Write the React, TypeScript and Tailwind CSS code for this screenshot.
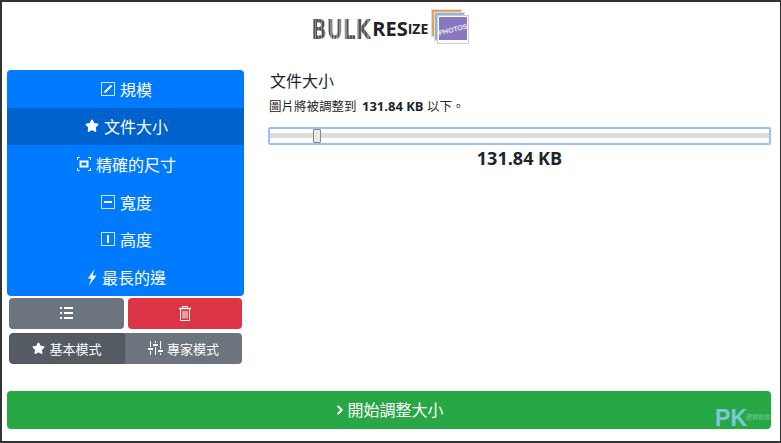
import { Star, ChevronRight } from "lucide-react"

const cjk = "font-['Liberation_Sans','Noto_Sans_CJK_TC',sans-serif]"

function SquareIcon({ kind }: { kind: "pen" | "minus" | "bar" }) {
  return (
    <svg width="14" height="14" viewBox="0 0 14 14" fill="none" className="shrink-0">
      <rect x="0.5" y="0.5" width="13" height="13" stroke="#cfe4ff" />
      {kind === "pen" && <path d="M3.5 10.5 L10.5 3.5" stroke="white" strokeWidth="2" />}
      {kind === "minus" && <path d="M3 7 H11" stroke="white" strokeWidth="2" />}
      {kind === "bar" && <path d="M7 3 V11" stroke="white" strokeWidth="2" />}
    </svg>
  )
}

function FocusIcon() {
  return (
    <svg width="14" height="14" viewBox="0 0 14 14" fill="none" className="shrink-0">
      <path d="M0.5 3 V0.5 H3 M11 0.5 H13.5 V3 M13.5 11 V13.5 H11 M3 13.5 H0.5 V11" stroke="white" />
      <rect x="3.5" y="4.5" width="7" height="5" stroke="white" strokeWidth="2" />
    </svg>
  )
}

function BoltIcon() {
  return (
    <svg width="10" height="17" viewBox="0 0 10 17" className="shrink-0">
      <path d="M7.5 0 L1 9.5 H4.5 L1.5 17 L9.5 6.5 H5.5 Z" fill="white" />
    </svg>
  )
}

function ListIcon() {
  return (
    <svg width="13" height="12" viewBox="0 0 13 12" fill="white">
      <rect x="0" y="0" width="2" height="2" />
      <rect x="4" y="0" width="9" height="2" />
      <rect x="0" y="5" width="2" height="2" />
      <rect x="4" y="5" width="9" height="2" />
      <rect x="0" y="10" width="2" height="2" />
      <rect x="4" y="10" width="9" height="2" />
    </svg>
  )
}

function TrashIcon() {
  return (
    <svg width="12" height="15" viewBox="0 0 12 15" fill="none" stroke="white">
      <path d="M0 2.5 H12" strokeWidth="1.5" />
      <path d="M3.5 2 V0.5 H8.5 V2" />
      <path d="M1.5 3 V14.5 H10.5 V3" />
      <path d="M4 5 V12.5 M6 5 V12.5 M8 5 V12.5" />
    </svg>
  )
}

function SlidersIcon() {
  return (
    <svg width="15" height="14" viewBox="0 0 15 14" fill="none" stroke="white" className="shrink-0">
      <path d="M2.5 0 V6 M2.5 10 V14 M7.5 0 V2 M7.5 6 V14 M12.5 0 V8 M12.5 12 V14" />
      <path d="M0 8 H5 M5 4 H10 M10 10 H15" strokeWidth="2" />
    </svg>
  )
}

function NavRow({ icon, label, active }: { icon: React.ReactNode; label: string; active?: boolean }) {
  return (
    <div className={`flex h-[37.67px] items-center justify-center gap-[5px] pl-[2px] text-[16px] text-white ${active ? "bg-[#0062cc]" : ""}`}>
      {icon}
      <span className="pt-[4px]">{label}</span>
    </div>
  )
}

function Logo() {
  return (
    <div className="flex h-[68px] items-center justify-center pb-[14px]">
      <span className="mx-[-10px] inline-block scale-x-[0.74] bg-[repeating-linear-gradient(90deg,#555_0px,#555_1px,#8a8a8a_1px,#8a8a8a_2px)] bg-clip-text font-['DejaVu_Sans',sans-serif] text-[27px] leading-none font-bold text-transparent">BULK</span>
      <span className="ml-[1px] font-['Open_Sans',sans-serif] text-[20px] leading-none font-bold text-[#222]">RES</span>
      <span className="font-['Open_Sans',sans-serif] text-[14px] leading-none font-bold text-[#222]">IZE</span>
      <svg width="40" height="36" viewBox="0 0 40 36" className="mt-[-4px] ml-[3px]">
        <rect x="0.5" y="0.5" width="30" height="27" fill="#e2a64e" stroke="#ddd" />
        <rect x="3.5" y="3.5" width="30" height="28" fill="#8fb4e0" stroke="#ddd" />
        <rect x="6.5" y="6.5" width="31" height="28" fill="#fff" stroke="#ccc" />
        <rect x="8" y="8" width="28" height="23" fill="#8a77c0" />
        <text x="22" y="23" textAnchor="middle" fontSize="7" fontWeight="700" fill="#e8e4f5" fontFamily="Liberation Sans" transform="rotate(-14 22 21)">PHOTOS</text>
      </svg>
    </div>
  )
}

export default function App() {
  return (
    <div className={`relative h-[443px] w-[781px] overflow-hidden border-t-2 border-r border-b-2 border-l-2 border-[#333] bg-white ${cjk}`}>
      <Logo />
      <div className="flex">
        <div className="ml-[5px] w-[237px] shrink-0">
          <div className="overflow-hidden rounded-[4px] bg-[#007bff]">
            <NavRow icon={<SquareIcon kind="pen" />} label="規模" />
            <NavRow icon={<Star size={14} fill="white" stroke="white" className="shrink-0" />} label="文件大小" active />
            <NavRow icon={<FocusIcon />} label="精確的尺寸" />
            <NavRow icon={<SquareIcon kind="minus" />} label="寬度" />
            <NavRow icon={<SquareIcon kind="bar" />} label="高度" />
            <NavRow icon={<BoltIcon />} label="最長的邊" />
          </div>
          <div className="mt-[2px] flex gap-1 px-[2px]">
            <button className="flex h-[31px] w-[115px] items-center justify-center rounded-[4px] bg-[#6c757d] text-white">
              <ListIcon />
            </button>
            <button className="flex h-[31px] w-[114px] items-center justify-center rounded-[4px] bg-[#dc3545] text-white">
              <TrashIcon />
            </button>
          </div>
          <div className="mt-1 flex h-[31px] px-[2px] text-[13px] text-white">
            <div className="flex w-[116px] items-center justify-center gap-1 rounded-l-[4px] border border-[#4e555b] bg-[#545b62]">
              <Star size={13} fill="white" stroke="white" />
              <span className="pt-[2px]">基本模式</span>
            </div>
            <div className="flex w-[117px] items-center justify-center gap-1 rounded-r-[4px] bg-[#6c757d]">
              <SlidersIcon />
              <span className="pt-[2px]">專家模式</span>
            </div>
          </div>
        </div>
        <div className="ml-[24px] w-[503px] text-[#212529]">
          <div className="mt-[1px] pl-[2px] text-[16px] leading-[22px]">文件大小</div>
          <div className="mt-[4px] pl-[1px] text-[12.5px] leading-[18px]">
            圖片將被調整到 <b className="ml-[2px] font-['Open_Sans',sans-serif] text-[13px] font-bold">131.84 KB</b> 以下。
          </div>
          <div className="relative mt-[11px] h-[18px] rounded-[2px] border-2 border-[#9dbefc] bg-white">
            <div className="absolute top-[4px] right-0 left-0 h-[5px] bg-[#e0ddd8]" />
            <div className="absolute top-0 left-[43px] h-[14px] w-[8px] rounded-[1px] border border-[#888] bg-[#e9e7e4]" />
          </div>
          <div className="mt-[1px] text-center font-['Open_Sans',sans-serif] text-[18px] leading-[24px] font-bold">131.84 KB</div>
        </div>
      </div>
      <div className="relative mt-[27px] ml-[5px] flex h-[38px] w-[764px] items-center justify-center rounded-[4px] bg-[#28a745] pr-[1px] text-[16px] text-white">
        <ChevronRight size={14} strokeWidth={3.5} />
        <span className="pt-[3px]">開始調整大小</span>
        <span className="absolute right-[24px] bottom-[-1px] font-['Liberation_Sans',sans-serif] text-[23px] leading-[24px] font-bold text-[#7cc8d8]">PK</span>
        <span className="absolute right-[1px] bottom-[9px] text-[6px] leading-none text-[#6cc8a0]">硬體軟體</span>
      </div>
    </div>
  )
}
